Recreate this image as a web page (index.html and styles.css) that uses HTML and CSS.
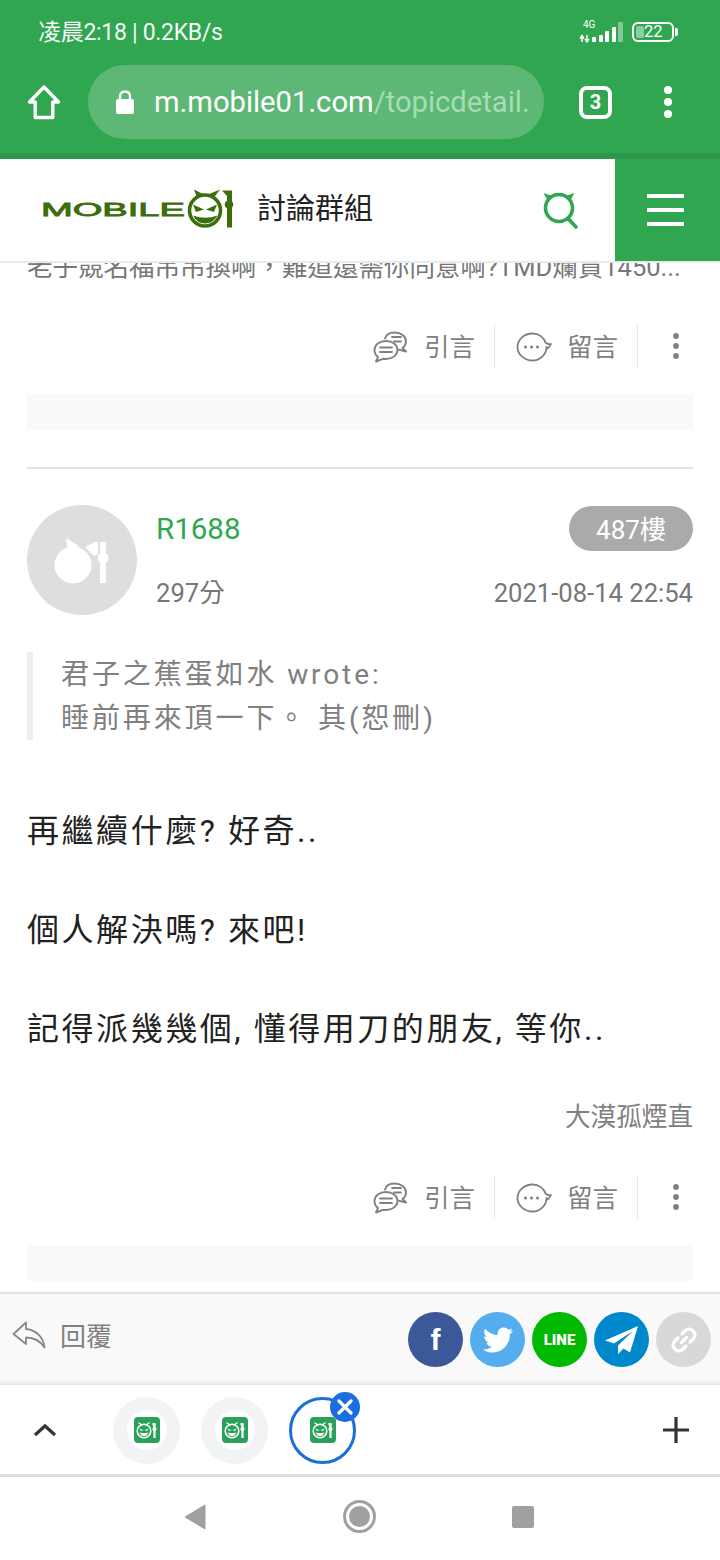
FILE: index.html
```html
<!DOCTYPE html>
<html lang="zh-Hant">
<head>
<meta charset="utf-8">
<title>Mobile01</title>
<link rel="stylesheet" href="styles.css">
</head>
<body>
<svg class="defs" width="0" height="0" aria-hidden="true">
  <symbol id="i-quote" viewBox="0 0 36 32">
    <path d="M12 7.5C13 3.5 17 1.5 21.5 1.5 28 1.5 33 5 33 10.500 33 13.500 31.500 15.500 29.500 17L33 20.500 25.500 18.700" fill="none" stroke="#808080" stroke-width="1.900" stroke-linejoin="round" stroke-linecap="round"/>
    <path d="M13 10C6.500 10 1.500 13.500 1.500 19 1.500 22 3 24.500 5 26L3 30.500 10 27.800C11 28 12 28 13 28 19.500 28 24.500 24 24.500 19 24.500 13.500 19.500 10 13 10Z" fill="#fff" stroke="#808080" stroke-width="1.900" stroke-linejoin="round"/>
    <path d="M7 16.500H19M7 21H19M19 6H28M21 10.500H28" stroke="#808080" stroke-width="1.800" stroke-linecap="round"/>
  </symbol>
  <symbol id="i-comment" viewBox="0 0 36 30">
    <path d="M30.500 15C30.500 22.500 24 28.500 16.500 28.500 8.500 28.500 1.500 22.500 1.500 15 1.500 7.500 8.500 1.500 16.500 1.500 23 1.500 28 5.500 29.500 10.500 31 12 33 12.500 35 12 34 14.500 32.500 16 30 17.500" fill="none" stroke="#808080" stroke-width="1.800" stroke-linejoin="round" stroke-linecap="round"/>
    <circle cx="9.500" cy="15" r="1.500" fill="#808080"/><circle cx="15.500" cy="15" r="1.500" fill="#808080"/><circle cx="21.500" cy="15" r="1.500" fill="#808080"/>
  </symbol>
  <symbol id="i-dots" viewBox="0 0 8 28">
    <circle cx="4" cy="4" r="2.900" fill="#808080"/><circle cx="4" cy="14" r="2.900" fill="#808080"/><circle cx="4" cy="24" r="2.900" fill="#808080"/>
  </symbol>
  <symbol id="i-app" viewBox="0 0 26 26">
    <rect width="26" height="26" rx="4" fill="#2aa05a"/>
    <circle cx="10" cy="14" r="6.800" fill="none" stroke="#fff" stroke-width="1.500"/>
    <path d="M5 6L8 8.200M15 6L12 8.200" stroke="#fff" stroke-width="1.400" stroke-linecap="round"/>
    <path d="M6 11.500L9.500 13.500 6.500 13.800ZM14 11.500L10.500 13.500 13.500 13.800Z" fill="#fff"/>
    <path d="M5.500 15.500Q10 17 14.500 15.500Q13 19 10 19Q7 19 5.500 15.500Z" fill="#fff"/>
    <path d="M20.500 6V21" stroke="#fff" stroke-width="2.200"/><circle cx="20.500" cy="12" r="2.100" fill="#fff"/>
    <path d="M18 6.500L19.500 6V10Z" fill="#fff"/>
  </symbol>
</svg>

<div class="page">
  <header class="chrome">
    <div class="status">
      <span class="clock">凌晨2:18 | 0.2KB/s</span>
      <div class="status-icons">
        <svg class="signal" width="46" height="24" viewBox="0 0 46 24">
          <text x="4" y="8" class="net">4G</text>
          <path d="M3 16V22M1 18.500L3 15.500 5 18.500M8 15V21M6 19L8 22 10 19" stroke="#fff" stroke-width="1.500" fill="none"/>
          <rect x="13" y="17" width="4" height="5" rx="1" fill="#fff"/>
          <rect x="20" y="15" width="4" height="7" rx="1" fill="#fff"/>
          <rect x="26" y="11" width="4" height="11" rx="1" fill="#fff"/>
          <rect x="33" y="7" width="4" height="15" rx="1" fill="#fff"/>
          <rect x="39" y="2" width="5" height="20" rx="1" fill="#fff" opacity=".4"/>
        </svg>
        <div class="battery">
          <div class="battery-body"><span class="battery-level"></span><span class="battery-num">22</span></div>
          <span class="battery-tip"></span>
        </div>
      </div>
    </div>
    <div class="urlbar">
      <svg class="home" width="34" height="36" viewBox="0 0 34 36">
        <path d="M17 3L31.500 18H25.800V33.500H8.200V18H2.500Z" fill="none" stroke="#fff" stroke-width="3.400" stroke-linejoin="round"/>
      </svg>
      <div class="pill">
        <svg class="lock" width="20" height="26" viewBox="0 0 20 26">
          <path d="M5 11V7.500C5 4.500 7 2.500 10 2.500S15 4.500 15 7.500V11" fill="none" stroke="#fff" stroke-width="2.400"/>
          <rect x="1" y="10" width="18" height="15" rx="2" fill="#fff"/>
        </svg>
        <span class="url"><span class="host">m.mobile01.com</span><span class="path">/topicdetail.</span></span>
      </div>
      <span class="tabcount">3</span>
      <span class="menu-dots"><i></i><i></i><i></i></span>
    </div>
  </header>

  <main class="viewport">
    <nav class="sitebar">
      <div class="brand">
        <svg class="logo" width="193" height="40" viewBox="0 0 193 40">
          <text x="0" y="26.500" class="logotext" textLength="144" lengthAdjust="spacingAndGlyphs">MOBILE</text>
          <circle cx="164" cy="21.500" r="15.500" fill="none" stroke="#3c6e0c" stroke-width="3.600"/>
          <path d="M153 .5L163 5.500 156 8.500ZM179 .5L167 5.500 173 8.500Z" fill="#3c6e0c"/>
          <path d="M152 15.500L163 20.500 155 23ZM176 15.500L165 20.500 173 23Z" fill="#3c6e0c"/>
          <path d="M152 26.500Q164 31 176.500 26.500Q172 34.500 164 34.500Q156 34.500 152 26.500Z" fill="#3c6e0c"/>
          <rect x="186" y="1.500" width="5" height="37" fill="#3c6e0c"/><path d="M181 1.500H186V7Z" fill="#3c6e0c"/><circle cx="188" cy="15.500" r="4.300" fill="#3c6e0c"/>
        </svg>
        <span class="title">討論群組</span>
      </div>
      <svg class="search" width="36" height="40" viewBox="0 0 36 40">
        <circle cx="16" cy="18" r="13.500" fill="none" stroke="#30a651" stroke-width="3.600"/>
        <path d="M.5 3L9.500 6 5 11ZM31.500 3L22.500 6 27 11Z" fill="#30a651"/>
        <path d="M25 28.500L33 37" stroke="#30a651" stroke-width="3.600" stroke-linecap="round"/>
      </svg>
      <div class="burger"><i></i><i></i><i></i></div>
    </nav>

    <div class="content">
      <p class="clipped">老子競名福吊吊換啊，難道還需你同意啊?TMD爛貨1450...</p>
      <div class="actions first">
        <div class="action"><svg class="act-icon" width="36" height="32"><use href="#i-quote"/></svg><span>引言</span></div>
        <div class="action mid"><svg class="act-icon" width="36" height="30"><use href="#i-comment"/></svg><span>留言</span></div>
        <div class="action more"><svg width="8" height="28"><use href="#i-dots"/></svg></div>
      </div>
      <div class="band"></div>
      <hr class="rule">

      <article class="post">
        <div class="post-head">
          <div class="avatar">
            <svg width="56" height="56" viewBox="0 0 56 56">
              <circle cx="19" cy="33" r="18.500" fill="#fff"/>
              <path d="M12 6L25 14 14 19Z" fill="#fff"/>
              <path d="M41 10L31 15 35 19 40 24 44 22V10Z" fill="#fff"/>
              <rect x="46" y="10" width="6" height="41" fill="#fff"/>
              <circle cx="49" cy="26" r="5.500" fill="#fff"/>
            </svg>
          </div>
          <div class="meta">
            <div class="meta-row top"><span class="name">R1688</span><span class="floor">487樓</span></div>
            <div class="meta-row"><span class="score">297分</span><span class="date">2021-08-14 22:54</span></div>
          </div>
        </div>
        <blockquote class="quote">君子之蕉蛋如水 wrote:<br>睡前再來頂一下。 其(恕刪)</blockquote>
        <div class="body">
          <p>再繼續什麼? 好奇..</p>
          <p>個人解決嗎? 來吧!</p>
          <p>記得派幾幾個, 懂得用刀的朋友, 等你..</p>
        </div>
        <div class="sign">大漠孤煙直</div>
        <div class="actions">
          <div class="action"><svg class="act-icon" width="36" height="32"><use href="#i-quote"/></svg><span>引言</span></div>
          <div class="action mid"><svg class="act-icon" width="36" height="30"><use href="#i-comment"/></svg><span>留言</span></div>
          <div class="action more"><svg width="8" height="28"><use href="#i-dots"/></svg></div>
        </div>
        <div class="band"></div>
      </article>
    </div>

    <div class="replybar">
      <div class="reply">
        <svg width="34" height="28" viewBox="0 0 34 28">
          <path d="M14 1.500L1.500 13 14 23V16.500C22 16.500 28 19.500 32.500 26.500 31.500 16.500 24.500 9 14 8Z" fill="none" stroke="#888" stroke-width="1.800" stroke-linejoin="round"/>
        </svg>
        <span>回覆</span>
      </div>
      <div class="share">
        <span class="sns fb">f</span>
        <span class="sns tw">
          <svg width="30" height="26" viewBox="0 0 24 20"><path d="M24 2.400c-.9.400-1.800.7-2.800.800 1-.6 1.800-1.600 2.200-2.700-1 .6-2 1-3.100 1.200C19.300.7 18 0 16.600 0c-2.700 0-4.900 2.200-4.900 4.900 0 .4 0 .8.100 1.100C7.700 5.800 4.100 3.900 1.700.9 1.200 1.600 1 2.500 1 3.400c0 1.700.9 3.200 2.200 4.100-.8 0-1.600-.2-2.200-.6v.1c0 2.400 1.700 4.400 3.900 4.800-.7.200-1.500.2-2.200.1.600 2 2.400 3.400 4.600 3.400-1.700 1.300-3.800 2.100-6.100 2.100-.4 0-.8 0-1.200-.1C2.200 19.200 4.800 20 7.500 20c9.100 0 14-7.500 14-14v-.6c1-.7 1.800-1.600 2.500-3z" fill="#fff"/></svg>
        </span>
        <span class="sns line">LINE</span>
        <span class="sns tg">
          <svg width="34" height="28" viewBox="0 0 34 28"><path d="M33 0L0 14.500 9 17.500 28 5 13 19.500V28L18.500 22.500 25 26.500Z" fill="#fff"/></svg>
        </span>
        <span class="sns link">
          <svg width="28" height="28" viewBox="0 0 28 28"><path d="M11.500 16.500L16.500 11.500M12 8L15.500 4.500C17.500 2.500 20.500 2.500 22.500 4.500L23.500 5.500C25.500 7.500 25.500 10.500 23.500 12.500L20 16M16 20L12.500 23.500C10.500 25.500 7.500 25.500 5.500 23.500L4.500 22.500C2.500 20.500 2.500 17.500 4.500 15.500L8 12" fill="none" stroke="#fff" stroke-width="3.200" stroke-linecap="round"/></svg>
        </span>
      </div>
    </div>
  </main>

  <div class="tabstrip">
    <svg class="chev" width="24" height="14" viewBox="0 0 24 14"><path d="M2 12L12 3 22 12" fill="none" stroke="#333" stroke-width="3.200"/></svg>
    <div class="tabs">
      <span class="tab"><span class="tab-inner"><svg width="26" height="26"><use href="#i-app"/></svg></span></span>
      <span class="tab"><span class="tab-inner"><svg width="26" height="26"><use href="#i-app"/></svg></span></span>
      <span class="tab active"><svg width="26" height="26"><use href="#i-app"/></svg>
        <span class="close"><svg width="16" height="16" viewBox="0 0 16 16"><path d="M2 2L14 14M14 2L2 14" stroke="#fff" stroke-width="3.200" stroke-linecap="round"/></svg></span>
      </span>
    </div>
    <svg class="plus" width="28" height="28" viewBox="0 0 28 28"><path d="M14 1V27M1 14H27" stroke="#333" stroke-width="3.200"/></svg>
  </div>

  <footer class="navbar">
    <svg width="22" height="26" viewBox="0 0 22 26"><path d="M21 1V25L1 13Z" fill="#a0a0a0" stroke="#a0a0a0" stroke-width="1" stroke-linejoin="round"/></svg>
    <span class="nav-home"><i></i></span>
    <span class="nav-square"></span>
  </footer>
</div>
</body>
</html>
```

FILE: styles.css
```css
* { box-sizing: border-box; }
html, body { margin: 0; padding: 0; }
body {
  width: 720px;
  height: 1560px;
  overflow: hidden;
  background: #fff;
  font-family: Roboto, "Noto Sans CJK TC", sans-serif;
  color: #222;
}
.defs { position: absolute; }
.page { width: 720px; height: 1560px; display: flex; flex-direction: column; overflow: hidden; }

/* browser chrome */
.chrome { height: 159px; flex: none; background: #30a651; border-bottom: 6px solid #2c964a; }
.status { height: 64px; padding: 0 42px 0 38px; display: flex; align-items: center; justify-content: space-between; color: #fff; }
.clock { font-size: 23px; letter-spacing: -.3px; opacity: .96; margin-top: -5px; }
.status-icons { display: flex; align-items: center; gap: 7px; }
.net { font: 10px Roboto, sans-serif; fill: #fff; }
.battery { display: flex; align-items: center; gap: 1px; }
.battery-body { width: 42px; height: 20px; border: 2px solid #fff; border-radius: 6px; position: relative; padding: 2px; }
.battery-level { display: block; width: 8px; height: 12px; background: rgba(255,255,255,.45); border-radius: 2px; }
.battery-num { position: absolute; left: 10px; top: -2px; font-size: 16.500px; line-height: 20px; color: #fff; }
.battery-tip { width: 3px; height: 8px; background: #fff; border-radius: 0 2px 2px 0; }

.urlbar { height: 74px; margin-top: 1px; display: flex; align-items: center; padding-left: 27px; }
.home { flex: none; }
.pill { width: 456px; height: 74px; margin-left: 27px; border-radius: 37px; background: #5cb874; display: flex; align-items: center; padding-left: 27px; flex: none; }
.lock { flex: none; }
.url { margin-left: 19px; font-size: 29.200px; white-space: nowrap; }
.host { color: #fff; }
.path { color: #a8dcb6; }
.tabcount { width: 33px; height: 33px; margin-left: 35px; flex: none; border: 4px solid #fff; border-radius: 8px; color: #fff; font-size: 20px; font-weight: 700; display: flex; align-items: center; justify-content: center; }
.menu-dots { margin-left: 52px; display: flex; flex-direction: column; gap: 4px; }
.menu-dots i { display: block; width: 8px; height: 8px; border-radius: 50%; background: #fff; }

/* viewport */
.viewport { height: 1226px; flex: none; display: flex; flex-direction: column; overflow: hidden; }
.sitebar { height: 104px; flex: none; background: #fff; border-bottom: 2px solid #e6ece9; display: flex; align-items: stretch; position: relative; z-index: 1; }
.brand { display: flex; align-items: center; padding-left: 41px; flex: none; width: 543px; }
.logo { flex: none; margin-top: -3px; }
.logotext { font: 400 19px "Liberation Sans", sans-serif; fill: #3c6e0c; stroke: #3c6e0c; stroke-width: .8px; }
.title { font-size: 29px; margin-left: 23px; margin-bottom: 8px; color: #222; }
.search { flex: none; align-self: center; }
.burger { margin-left: auto; width: 105px; height: 102px; background: #30a651; display: flex; flex-direction: column; align-items: center; justify-content: center; gap: 10px; padding-right: 4px; }
.burger i { display: block; width: 37px; height: 4px; background: #fff; }

.content { flex: 1; min-height: 0; padding: 0 27px; overflow: hidden; }
.clipped { margin: -18px 0 0; height: 44px; font-size: 25.500px; line-height: 44px; color: #777; white-space: nowrap; }
.actions { height: 46px; display: flex; justify-content: flex-end; align-items: center; }
.actions.first { margin-top: 34px; }
.action { height: 44px; display: flex; align-items: center; font-size: 25.500px; color: #808080; gap: 15px; }
.action span { margin-bottom: 3px; }
.act-icon { margin-top: 2px; }
.action.mid { border-left: 1px solid #e8e8e8; border-right: 1px solid #e8e8e8; padding: 0 19px 0 21px; margin-left: 19px; }
.action.more { width: 55px; justify-content: flex-end; padding-right: 13px; }
.band { height: 36px; background: #f9f9f9; margin-top: 25px; }
.rule { margin: 37px 0 0; border: 0; height: 2px; background: #dde8e4; }

.post { display: block; }
.post-head { margin-top: 36px; display: flex; gap: 19px; }
.avatar { width: 110px; height: 110px; flex: none; border-radius: 50%; background: #dedede; display: flex; align-items: center; justify-content: center; }
.meta { flex: 1; display: flex; flex-direction: column; }
.meta-row { display: flex; justify-content: space-between; align-items: center; }
.meta-row.top { height: 47px; margin-bottom: 19px; }
.name { color: #30a651; font-size: 29.500px; }
.floor { width: 124px; height: 45px; border-radius: 23px; background: #aaa; color: #fff; font-size: 26px; padding-bottom: 3px; display: flex; align-items: center; justify-content: center; }
.score, .date { font-size: 25.600px; color: #777; line-height: 44px; }
.quote { margin: 37px 0 0; height: 88px; border-left: 6px solid #eee; padding: 1px 0 0 28px; font-size: 28px; line-height: 44px; letter-spacing: 2.900px; color: #808080; white-space: nowrap; }
.body { margin-top: 66px; font-size: 32px; line-height: 50px; letter-spacing: 2.550px; color: #222; }
.body p { margin: 0 0 49px; }
.sign { margin-top: -6px; height: 40px; line-height: 40px; text-align: right; font-size: 25.600px; color: #808080; }
.post .actions { margin-top: 37px; }

.replybar { height: 93px; flex: none; background: #f9f9f9; border-top: 2px solid #e3e3e3; display: flex; align-items: center; justify-content: space-between; padding: 0 9px 0 12px; box-shadow: inset 0 -6px 6px -6px #ccc; }
.reply { display: flex; align-items: center; gap: 14px; font-size: 26px; color: #808080; padding-bottom: 10px; }
.share { display: flex; gap: 7px; }
.sns { width: 55px; height: 55px; border-radius: 50%; display: flex; align-items: center; justify-content: center; color: #fff; flex: none; }
.fb { background: #3b5998; font: 700 30px "Liberation Sans", sans-serif; }
.tw { background: #55acee; }
.line { background: #00b900; font-size: 15px; font-weight: 900; }
.tg { background: #0088cc; }
.link { background: #d8d8d8; }

/* tab strip */
.tabstrip { height: 91px; flex: none; background: #fff; border-bottom: 3px solid #dedede; display: flex; align-items: center; padding: 0 30px 0 33px; margin-top: 1px; }
.chev { flex: none; }
.tabs { display: flex; align-items: center; gap: 21px; margin-left: 56px; }
.tab { width: 67px; height: 67px; border-radius: 50%; background: #f1f3f4; display: flex; align-items: center; justify-content: center; position: relative; flex: none; }
.tab-inner { width: 40px; height: 40px; border-radius: 50%; background: #fff; display: flex; align-items: center; justify-content: center; }
.tab.active { background: #fff; border: 3.500px solid #1a6fd8; }
.close { position: absolute; top: -8px; right: -7px; width: 30px; height: 30px; border-radius: 50%; background: #1a6fe0; display: flex; align-items: center; justify-content: center; }
.plus { margin-left: auto; flex: none; }

/* android nav */
.navbar { flex: 1; background: #fff; display: flex; align-items: center; padding: 0 186px 4px 184px; justify-content: space-between; }
.nav-home { width: 33px; height: 33px; border-radius: 50%; border: 3px solid #a0a0a0; display: flex; align-items: center; justify-content: center; }
.nav-home i { display: block; width: 21px; height: 21px; border-radius: 50%; background: #a0a0a0; }
.nav-square { width: 22px; height: 22px; background: #a0a0a0; border-radius: 2px; }
```
